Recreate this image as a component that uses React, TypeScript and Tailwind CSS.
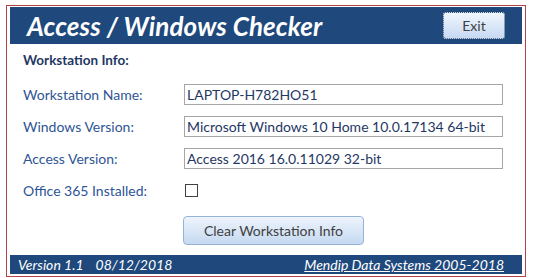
const font = { fontFamily: 'Lato, "Open Sans", sans-serif' };

function Field({ label, value }: { label: string; value: string }) {
  return (
    <div className="flex items-center h-[21px]">
      <div className="w-[161px] text-[14px] text-[#2e5596]">{label}</div>
      <div className="w-[319px] h-[21px] border border-[#a6a6a6] flex items-center px-[2px] text-[14px] text-[#1f3864] whitespace-nowrap">
        {value}
      </div>
    </div>
  );
}

export default function App() {
  return (
    <div className="w-[533px] h-[278px] bg-white pt-[5px] pl-[6px]" style={font}>
      <div className="w-[520px] h-[272px] border border-[#b0444a] px-[3px] pt-[1px] pb-[2px] flex flex-col">
        {/* header */}
        <div className="h-[37px] bg-[#1f497d] flex items-center justify-between pl-[17px] pr-[17px]">
          <h1 className="text-white text-[26px] font-bold italic leading-none tracking-[0.1px]">
            Access / Windows Checker
          </h1>
          <button className="w-[62px] h-[27px] rounded-[3px] border border-dotted border-[#39506b] bg-gradient-to-b from-[#f1f6fd] to-[#c6d9f3] text-[14px] text-[#404040]">
            Exit
          </button>
        </div>

        {/* body */}
        <div className="flex-1 pl-[13px] flex flex-col">
          <div className="mt-[8px] h-[16px] text-[13.5px] font-bold text-[#1f3864] leading-[16px]">
            Workstation Info:
          </div>
          <div className="mt-[16px] flex flex-col gap-[11px]">
            <Field label="Workstation Name:" value="LAPTOP-H782HO51" />
            <Field label="Windows Version:" value="Microsoft Windows 10 Home 10.0.17134 64-bit" />
            <Field label="Access Version:" value="Access 2016 16.0.11029 32-bit" />
            <div className="flex items-center h-[21px]">
              <div className="w-[162px] text-[14px] text-[#2e5596]">Office 365 Installed:</div>
              <div className="w-[13px] h-[13px] border border-[#404040] bg-white" />
            </div>
          </div>
          <button className="mt-[15px] ml-[160px] w-[181px] h-[29px] rounded-[4px] border border-[#95b3d7] bg-gradient-to-b from-[#eef4fc] to-[#c5d9f1] text-[14px] text-[#404040]">
            Clear Workstation Info
          </button>
        </div>

        {/* footer */}
        <div className="h-[19px] bg-[#1f497d] flex items-center justify-between pl-[8px] pr-[18px] text-white text-[14px] italic">
          <div className="flex">
            <span>Version 1.1</span>
            <span className="ml-[12px]">08/12/2018</span>
          </div>
          <span className="underline">Mendip Data Systems 2005-2018</span>
        </div>
      </div>
    </div>
  );
}
